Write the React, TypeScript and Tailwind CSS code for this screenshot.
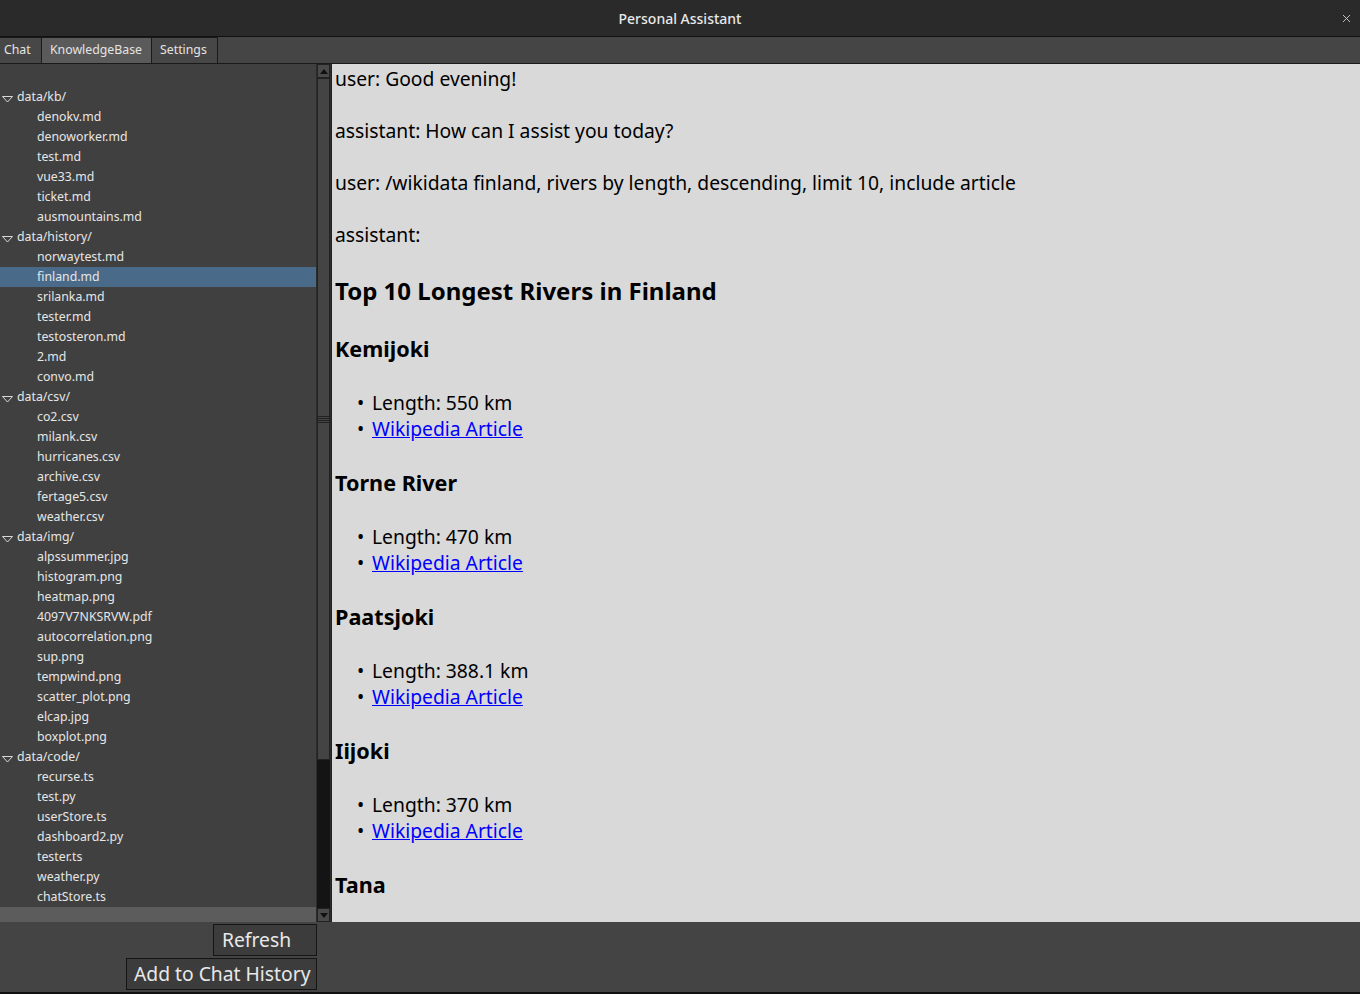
import { X } from "lucide-react"

const tree: { folder: string; files: string[] }[] = [
  { folder: "data/kb/", files: ["denokv.md", "denoworker.md", "test.md", "vue33.md", "ticket.md", "ausmountains.md"] },
  {
    folder: "data/history/",
    files: ["norwaytest.md", "finland.md", "srilanka.md", "tester.md", "testosteron.md", "2.md", "convo.md"],
  },
  { folder: "data/csv/", files: ["co2.csv", "milank.csv", "hurricanes.csv", "archive.csv", "fertage5.csv", "weather.csv"] },
  {
    folder: "data/img/",
    files: [
      "alpssummer.jpg",
      "histogram.png",
      "heatmap.png",
      "4097V7NKSRVW.pdf",
      "autocorrelation.png",
      "sup.png",
      "tempwind.png",
      "scatter_plot.png",
      "elcap.jpg",
      "boxplot.png",
    ],
  },
  {
    folder: "data/code/",
    files: ["recurse.ts", "test.py", "userStore.ts", "dashboard2.py", "tester.ts", "weather.py", "chatStore.ts"],
  },
]

const rivers = [
  { name: "Kemijoki", length: "550 km" },
  { name: "Torne River", length: "470 km" },
  { name: "Paatsjoki", length: "388.1 km" },
  { name: "Iijoki", length: "370 km" },
]

function Arrow() {
  return (
    <svg width="11" height="7" viewBox="0 0 11 7" className="ml-[2px] mt-[4px]">
      <path d="M0.5 0.5 L10.5 0.5 L5.5 6 Z" fill="none" stroke="#d8d8d8" strokeWidth="1" />
    </svg>
  )
}

export default function App() {
  return (
    <div
      className="w-[1360px] h-[994px] flex flex-col bg-[#444444] overflow-hidden"
      style={{ fontFamily: "'Noto Sans', 'Open Sans', sans-serif" }}
    >
      {/* title bar */}
      <div className="h-[37px] shrink-0 bg-[#2a2a2a] border-b border-[#111] relative flex items-center justify-center">
        <span className="text-[14px] font-medium text-[#e8e8e8]">Personal Assistant</span>
        <X className="absolute right-[7px] top-[12px] w-[13px] h-[13px] text-[#e0e0e0]" strokeWidth={1.5} />
      </div>

      {/* tabs */}
      <div className="h-[27px] shrink-0 bg-[#454545] border-b border-[#1a1a1a] flex items-end text-[12.3px] text-[#e4e4e4]">
        <div className="w-[42px] h-[26px] pl-[4px] flex items-center bg-[#474747] border-r border-t border-[#1a1a1a]">
          Chat
        </div>
        <div className="w-[110px] h-[26px] pl-[8px] flex items-center bg-[#5a5a5a] border-r border-t border-[#1a1a1a]">
          KnowledgeBase
        </div>
        <div className="w-[66px] h-[26px] pl-[8px] flex items-center bg-[#474747] border-r border-t border-[#1a1a1a]">
          Settings
        </div>
      </div>

      {/* main */}
      <div className="flex h-[858px] shrink-0">
        <div className="w-[316px] flex flex-col bg-[#404040]">
          <div className="flex-1 pt-[23px] text-[12.3px] text-[#e6e6e6] overflow-hidden">
            {tree.map((g) => (
              <div key={g.folder}>
                <div className="h-[20px] flex items-center">
                  <Arrow />
                  <span className="ml-[4px]">{g.folder}</span>
                </div>
                {g.files.map((f) => (
                  <div
                    key={f}
                    className={`h-[20px] flex items-center pl-[37px] ${f === "finland.md" ? "bg-[#4a6a8a]" : ""}`}
                  >
                    {f}
                  </div>
                ))}
              </div>
            ))}
          </div>
          <div className="h-[15px] bg-[#5c5c5c]" />
        </div>

        {/* scrollbar */}
        <div className="w-[15px] bg-[#141414] border-x border-[#2c2c2c] flex flex-col">
          <div className="h-[14px] bg-[#4a4a4a] border border-[#222] flex items-center justify-center">
            <svg width="8" height="5" viewBox="0 0 8 5">
              <path d="M0 5 L4 0 L8 5 Z" fill="#111" />
            </svg>
          </div>
          <div className="h-[682px] bg-[#444] border border-[#222] flex items-center justify-center">
            <div className="flex flex-col gap-[1px]">
              <div className="w-[11px] h-[1px] bg-[#222]" />
              <div className="w-[11px] h-[1px] bg-[#222]" />
              <div className="w-[11px] h-[1px] bg-[#222]" />
              <div className="w-[11px] h-[1px] bg-[#222]" />
            </div>
          </div>
          <div className="flex-1" />
          <div className="h-[14px] bg-[#4a4a4a] border border-[#222] flex items-center justify-center">
            <svg width="8" height="5" viewBox="0 0 8 5">
              <path d="M0 0 L8 0 L4 5 Z" fill="#111" />
            </svg>
          </div>
        </div>

        {/* content */}
        <div className="flex-1 bg-[#d9d9d9] border-l border-[#222] pl-[3px] pt-[2px] text-black overflow-hidden">
          <p className="text-[19.3px] leading-[26px] mb-[26px]">user: Good evening!</p>
          <p className="text-[19.3px] leading-[26px] mb-[26px]">assistant: How can I assist you today?</p>
          <p className="text-[19.3px] leading-[26px] mb-[26px]">
            user: /wikidata finland, rivers by length, descending, limit 10, include article
          </p>
          <p className="text-[19.3px] leading-[26px]">assistant:</p>
          <h1 className="text-[24px] leading-[34px] font-bold mt-[26px]">Top 10 Longest Rivers in Finland</h1>
          {rivers.map((r) => (
            <div key={r.name}>
              <h2 className="text-[21.6px] leading-[28px] font-bold mt-[27px]">{r.name}</h2>
              <ul className="mt-[27px] text-[19.3px] leading-[26px]">
                <li className="flex">
                  <span className="ml-[22px] w-[15px]">•</span>
                  <span>Length: {r.length}</span>
                </li>
                <li className="flex">
                  <span className="ml-[22px] w-[15px]">•</span>
                  <a className="text-[#0000ff] underline">Wikipedia Article</a>
                </li>
              </ul>
            </div>
          ))}
          <h2 className="text-[21.6px] leading-[28px] font-bold mt-[27px]">Tana</h2>
        </div>
      </div>

      {/* bottom */}
      <div className="flex-1 flex flex-col items-start pl-[126px] pt-[2px] gap-[2px] border-b-2 border-[#111]">
        <div className="w-[191px] flex justify-end">
          <button className="w-[104px] h-[32px] text-left pl-[8px] text-[19.3px] text-[#e8e8e8] bg-[#3c3c3c] border border-[#151515]">
            Refresh
          </button>
        </div>
        <button className="w-[191px] h-[32px] text-left pl-[7px] text-[19.3px] text-[#e8e8e8] bg-[#3c3c3c] border border-[#151515]">
          Add to Chat History
        </button>
      </div>
    </div>
  )
}
